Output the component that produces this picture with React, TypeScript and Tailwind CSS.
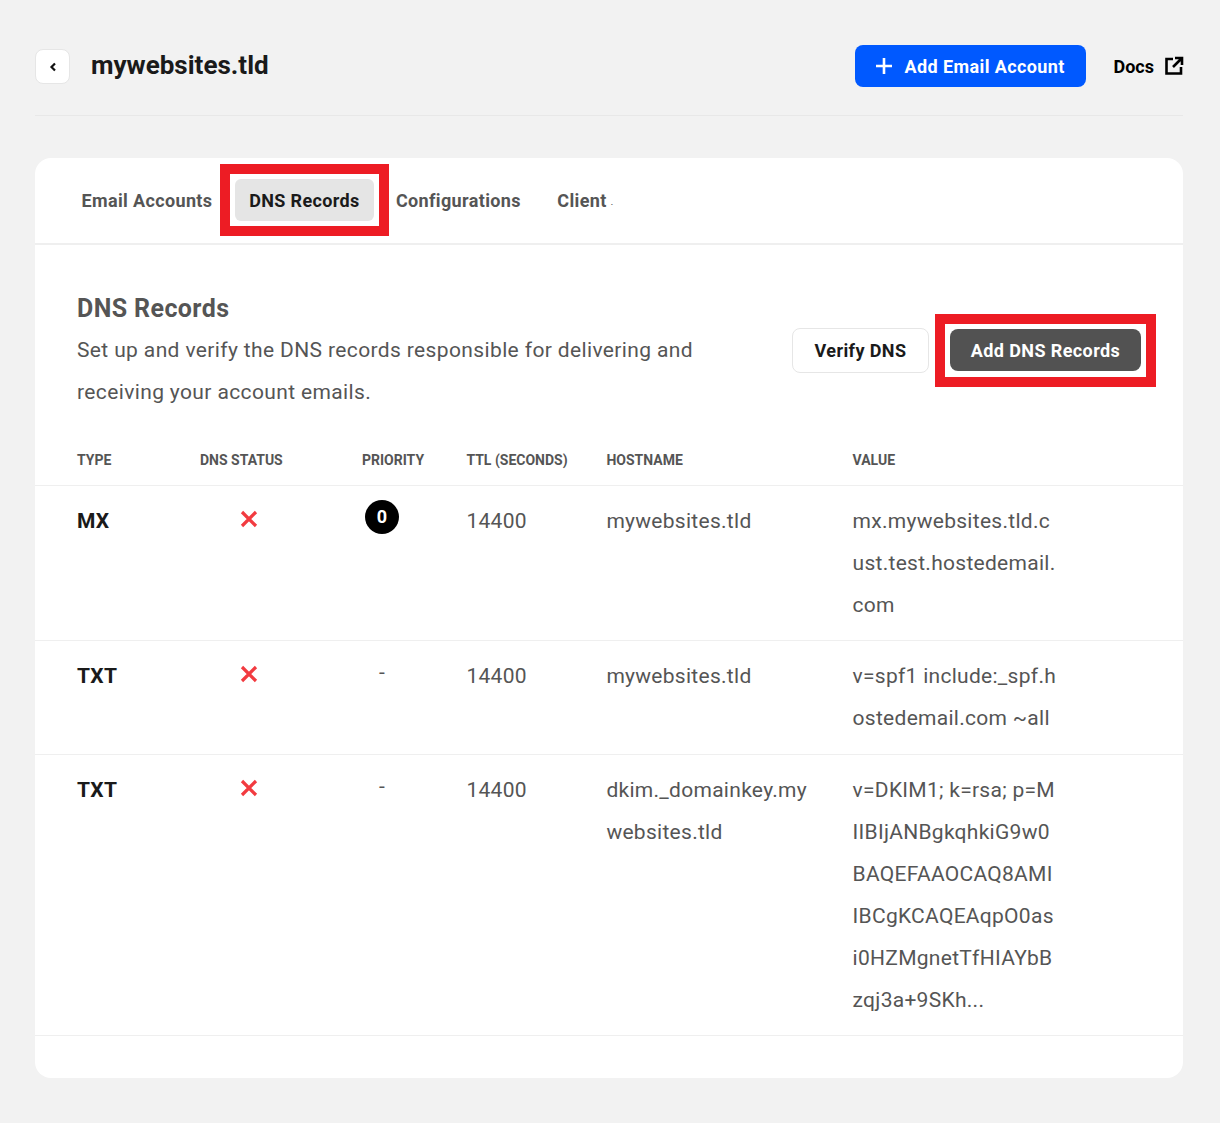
import React from "react";

const XMark = () => (
  <svg width="18" height="18" viewBox="0 0 18 18" fill="none" aria-hidden="true">
    <path d="M2 2L16 16M16 2L2 16" stroke="#f23b40" strokeWidth="3.2" />
  </svg>
);

const rows = [
  { type: "MX", priority: "0", host: "mywebsites.tld", value: "mx.mywebsites.tld.cust.test.hostedemail.com" },
  { type: "TXT", priority: "-", host: "mywebsites.tld", value: "v=spf1 include:_spf.hostedemail.com ~all" },
  {
    type: "TXT",
    priority: "-",
    host: "dkim._domainkey.mywebsites.tld",
    value: "v=DKIM1; k=rsa; p=MIIBIjANBgkqhkiG9w0BAQEFAAOCAQ8AMIIBCgKCAQEAqpO0asi0HZMgnetTfHIAYbBzqj3a+9SKh...",
  },
];

const cols = "grid grid-cols-[123px_162px_104.4px_140px_246.2px_1fr] pl-[42px] pr-[125px]";

export default function App() {
  return (
    <div className="min-h-[1123px] bg-[#f2f2f2] pl-[35px] pr-[37px] pt-[45px] font-['Roboto',sans-serif]">
      <header className="flex h-[71px] items-start justify-between border-b border-[#e8e8e8]">
        <div className="flex items-center pt-[4px]">
          <button className="flex h-[35px] w-[35px] items-center justify-center rounded-lg border border-[#e6e6e6] bg-white">
            <svg width="8" height="10" viewBox="0 0 8 10" fill="none" aria-hidden="true">
              <path d="M6 1.5L2.5 5L6 8.5" stroke="#111" strokeWidth="2.2" />
            </svg>
          </button>
          <h1 className="ml-[21px] -mt-[3px] text-[26px] leading-[32px] font-bold text-[#1a1a1a]">mywebsites.tld</h1>
        </div>
        <div className="flex items-center">
          <button className="flex h-[42px] w-[231px] items-center rounded-lg bg-[#0059ff] pl-[20px] text-[18px] font-bold tracking-[0.4px] text-white">
            <svg width="18" height="18" viewBox="0 0 18 18" fill="none" aria-hidden="true">
              <path d="M9 1V17M1 9H17" stroke="#fff" strokeWidth="2.6" />
            </svg>
            <span className="ml-[12px]">Add Email Account</span>
          </button>
          <a className="ml-[28px] text-[18px] font-bold text-black">Docs</a>
          <svg className="ml-[10px] -mr-[1px]" width="20" height="20" viewBox="0 0 20 20" fill="none" aria-hidden="true">
            <path d="M9 3H2.5V17.5H17V11M11 2H18V9M18 2L9 11" stroke="#000" strokeWidth="2.6" />
          </svg>
        </div>
      </header>

      <main className="mt-[42px] h-[920px] rounded-2xl bg-white">
        <nav className="flex h-[87px] gap-[8px] border-b-2 border-[#efefef] pl-[32px] pt-[21px] text-[18px] font-bold tracking-[0.36px]">
          <a className="flex h-[42px] items-center px-[14.5px] text-[#555]">Email Accounts</a>
          <a className="relative flex h-[42px] w-[139px] items-center justify-center rounded-md bg-[#e5e5e5] text-[#1a1a1a]">
            DNS Records
            <span className="absolute -inset-[15px] border-[10px] border-[#ed1c24]" />
          </a>
          <a className="flex h-[42px] items-center px-[14px] text-[#555]">Configurations</a>
          <a className="flex h-[42px] items-center px-[14.5px] text-[#555]">
            Client<span className="ml-[4px] mt-[6px] text-[8px]">.</span>
          </a>
        </nav>

        <section className="flex items-start justify-between pl-[42px] pr-[42px] pt-[47px]">
          <div className="w-[640px]">
            <h2 className="mb-[5px] mt-[1px] text-[25px] leading-[31px] font-bold tracking-[0.4px] text-[#555]">DNS Records</h2>
            <p className="text-[21px] leading-[42px] tracking-[0.37px] text-[#555]">
              Set up and verify the DNS records responsible for delivering and receiving your account emails.
            </p>
          </div>
          <div className="mt-[36px] flex items-start gap-[21px] text-[18px] font-bold tracking-[0.4px]">
            <button className="h-[45px] w-[137px] rounded-lg border border-[#e6e6e6] bg-white text-[#1a1a1a]">
              Verify DNS
            </button>
            <div className="relative mt-[1px]">
              <button className="block h-[42px] w-[191px] rounded-lg bg-[#525252] text-white">
                Add DNS Records
              </button>
              <span className="pointer-events-none absolute -bottom-[16px] -left-[15px] -right-[15px] -top-[15px] border-[10px] border-[#ed1c24]" />
            </div>
          </div>
        </section>

        <div className={`${cols} mt-[21.6px] h-[51px] items-center border-b border-[#efefef] pt-[1px] text-[14px] font-bold text-[#555] uppercase`}>
          <div>Type</div>
          <div>DNS Status</div>
          <div>Priority</div>
          <div>TTL (Seconds)</div>
          <div>Hostname</div>
          <div>Value</div>
        </div>

        {rows.map((r, i) => (
          <div key={i} className={`${cols} border-b border-[#efefef] py-[14.25px] text-[21px] leading-[42px] tracking-[0.28px] text-[#555]`}>
            <div className="font-bold text-[#1a1a1a]">{r.type}</div>
            <div className="flex h-[38px] items-center pl-[40px]">
              <XMark />
            </div>
            <div className="flex h-[34px] w-[40px] items-center justify-center">
              {r.priority === "0" ? (
                <span className="flex h-[34px] w-[34px] items-center justify-center rounded-full bg-black text-[18px] font-bold tracking-normal text-white">
                  0
                </span>
              ) : (
                r.priority
              )}
            </div>
            <div>14400</div>
            <div className="break-all pr-[40px]">{r.host}</div>
            <div className="break-all">{r.value}</div>
          </div>
        ))}
      </main>
    </div>
  );
}
